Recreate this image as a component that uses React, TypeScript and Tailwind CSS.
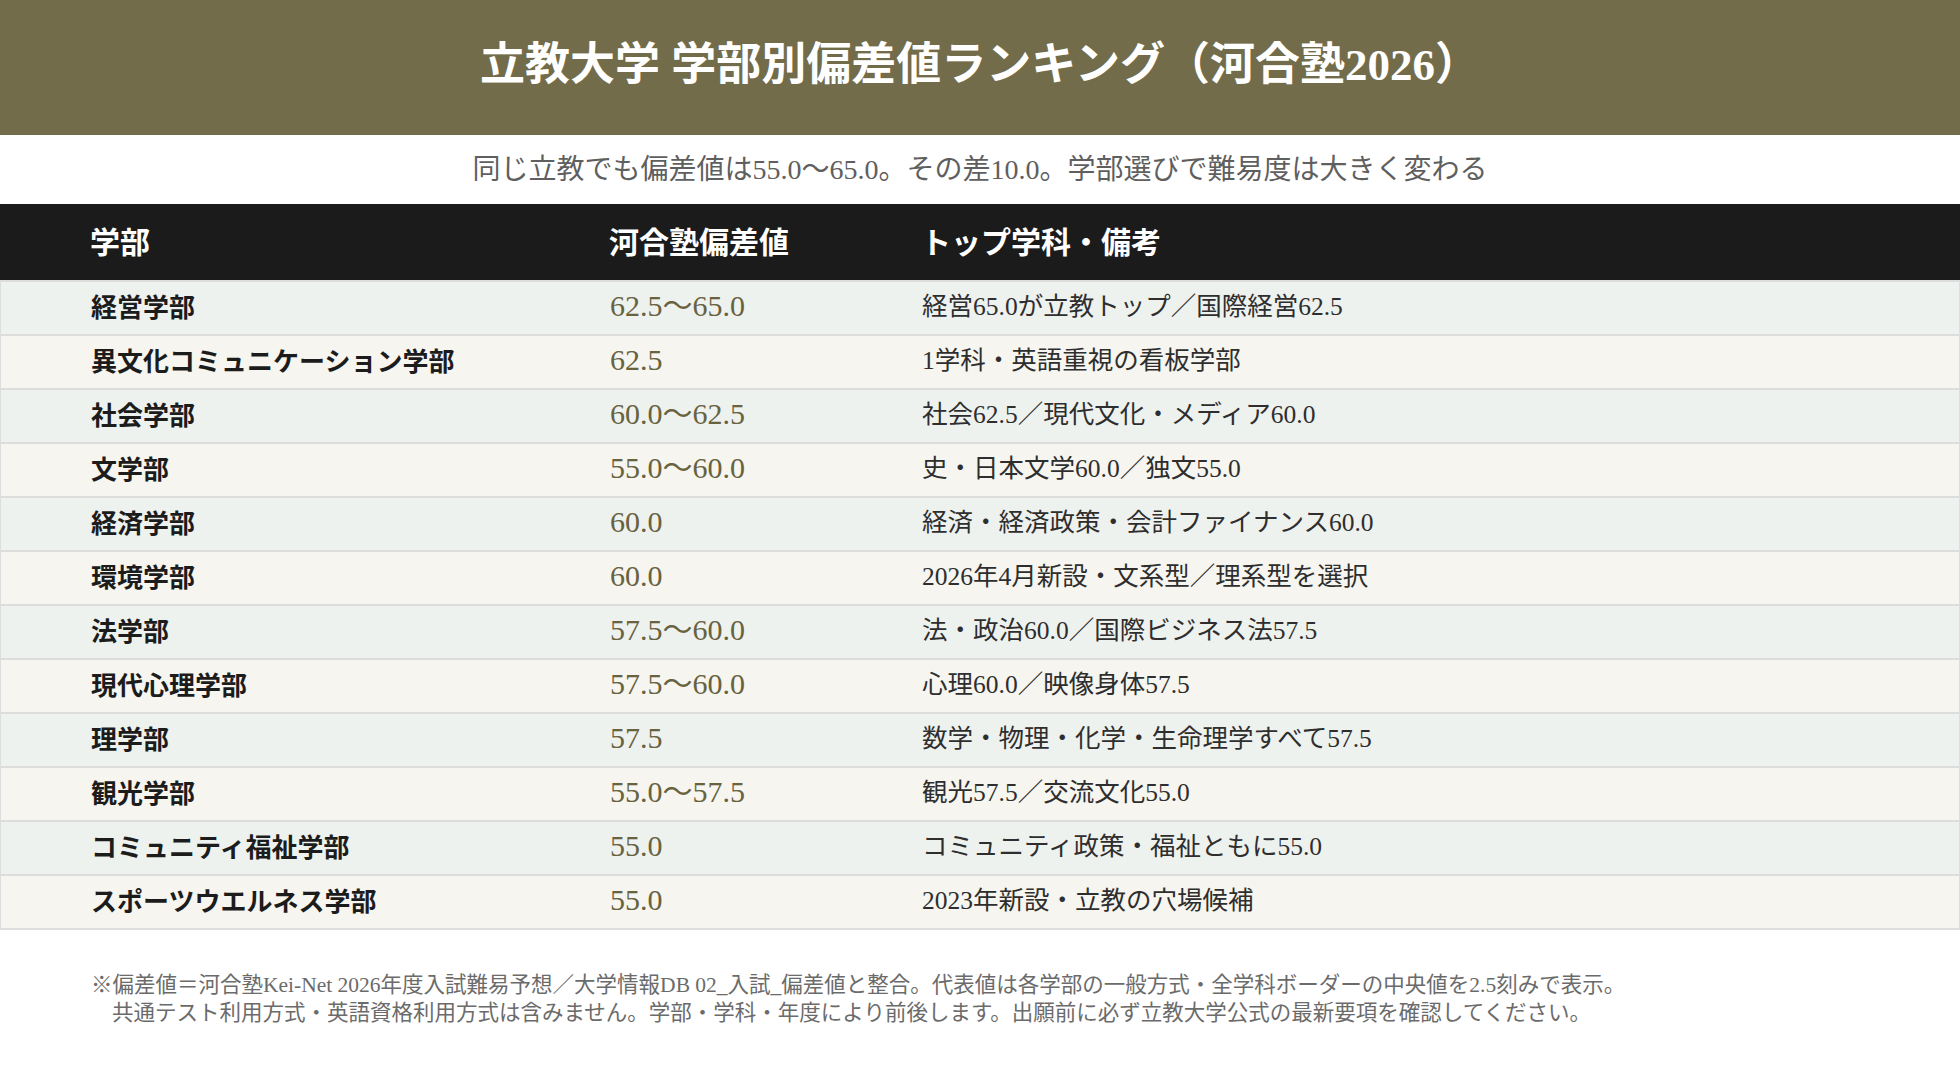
const rows = [
  { name: "経営学部", score: "62.5〜65.0", note: "経営65.0が立教トップ／国際経営62.5" },
  { name: "異文化コミュニケーション学部", score: "62.5", note: "1学科・英語重視の看板学部" },
  { name: "社会学部", score: "60.0〜62.5", note: "社会62.5／現代文化・メディア60.0" },
  { name: "文学部", score: "55.0〜60.0", note: "史・日本文学60.0／独文55.0" },
  { name: "経済学部", score: "60.0", note: "経済・経済政策・会計ファイナンス60.0" },
  { name: "環境学部", score: "60.0", note: "2026年4月新設・文系型／理系型を選択" },
  { name: "法学部", score: "57.5〜60.0", note: "法・政治60.0／国際ビジネス法57.5" },
  { name: "現代心理学部", score: "57.5〜60.0", note: "心理60.0／映像身体57.5" },
  { name: "理学部", score: "57.5", note: "数学・物理・化学・生命理学すべて57.5" },
  { name: "観光学部", score: "55.0〜57.5", note: "観光57.5／交流文化55.0" },
  { name: "コミュニティ福祉学部", score: "55.0", note: "コミュニティ政策・福祉ともに55.0" },
  { name: "スポーツウエルネス学部", score: "55.0", note: "2023年新設・立教の穴場候補" },
];

export default function App() {
  return (
    <div className="w-[1960px] h-[1068px] bg-white font-['Liberation_Serif','Noto_Sans_CJK_JP',serif] overflow-hidden">
      <header className="h-[135px] bg-[#736c4a] flex items-center justify-center pb-[4px]">
        <h1 className="text-[45px] font-bold text-white">
          立教大学 学部別偏差値ランキング（河合塾2026）
        </h1>
      </header>

      <div className="h-[69px] flex items-center justify-center">
        <p className="text-[28px] text-[#5f5f5f]">
          同じ立教でも偏差値は55.0〜65.0。その差10.0。学部選びで難易度は大きく変わる
        </p>
      </div>

      <div className="h-[76px] bg-[#1b1b1b] text-white text-[30px] font-bold grid grid-cols-[609px_312px_1fr] items-center">
        <div className="pl-[90px]">学部</div>
        <div>河合塾偏差値</div>
        <div>トップ学科・備考</div>
      </div>

      <div className="border-t-2 border-x border-[#dddddd]">
        {rows.map((r, i) => (
          <div
            key={r.name}
            className={
              "h-[54px] border-b-2 border-[#dddddd] grid grid-cols-[609px_312px_1fr] items-center " +
              (i % 2 === 0 ? "bg-[#eef2ef]" : "bg-[#f6f5ef]")
            }
          >
            <div className="pl-[90px] text-[26px] font-bold text-[#1c1c1c]">{r.name}</div>
            <div className="pb-[5px] text-[30px] text-[#68623f]">{r.score}</div>
            <div className="pb-[1px] text-[25.5px] text-[#2e2e2e]">{r.note}</div>
          </div>
        ))}
      </div>

      <div className="pt-[41px] pl-[91px] text-[21.5px] leading-[28px] text-[#6b6b6b]">
        <p>
          ※偏差値＝河合塾Kei-Net 2026年度入試難易予想／大学情報DB 02_入試_偏差値と整合。代表値は各学部の一般方式・全学科ボーダーの中央値を2.5刻みで表示。
        </p>
        <p className="pl-[21px]">
          共通テスト利用方式・英語資格利用方式は含みません。学部・学科・年度により前後します。出願前に必ず立教大学公式の最新要項を確認してください。
        </p>
      </div>
    </div>
  );
}
